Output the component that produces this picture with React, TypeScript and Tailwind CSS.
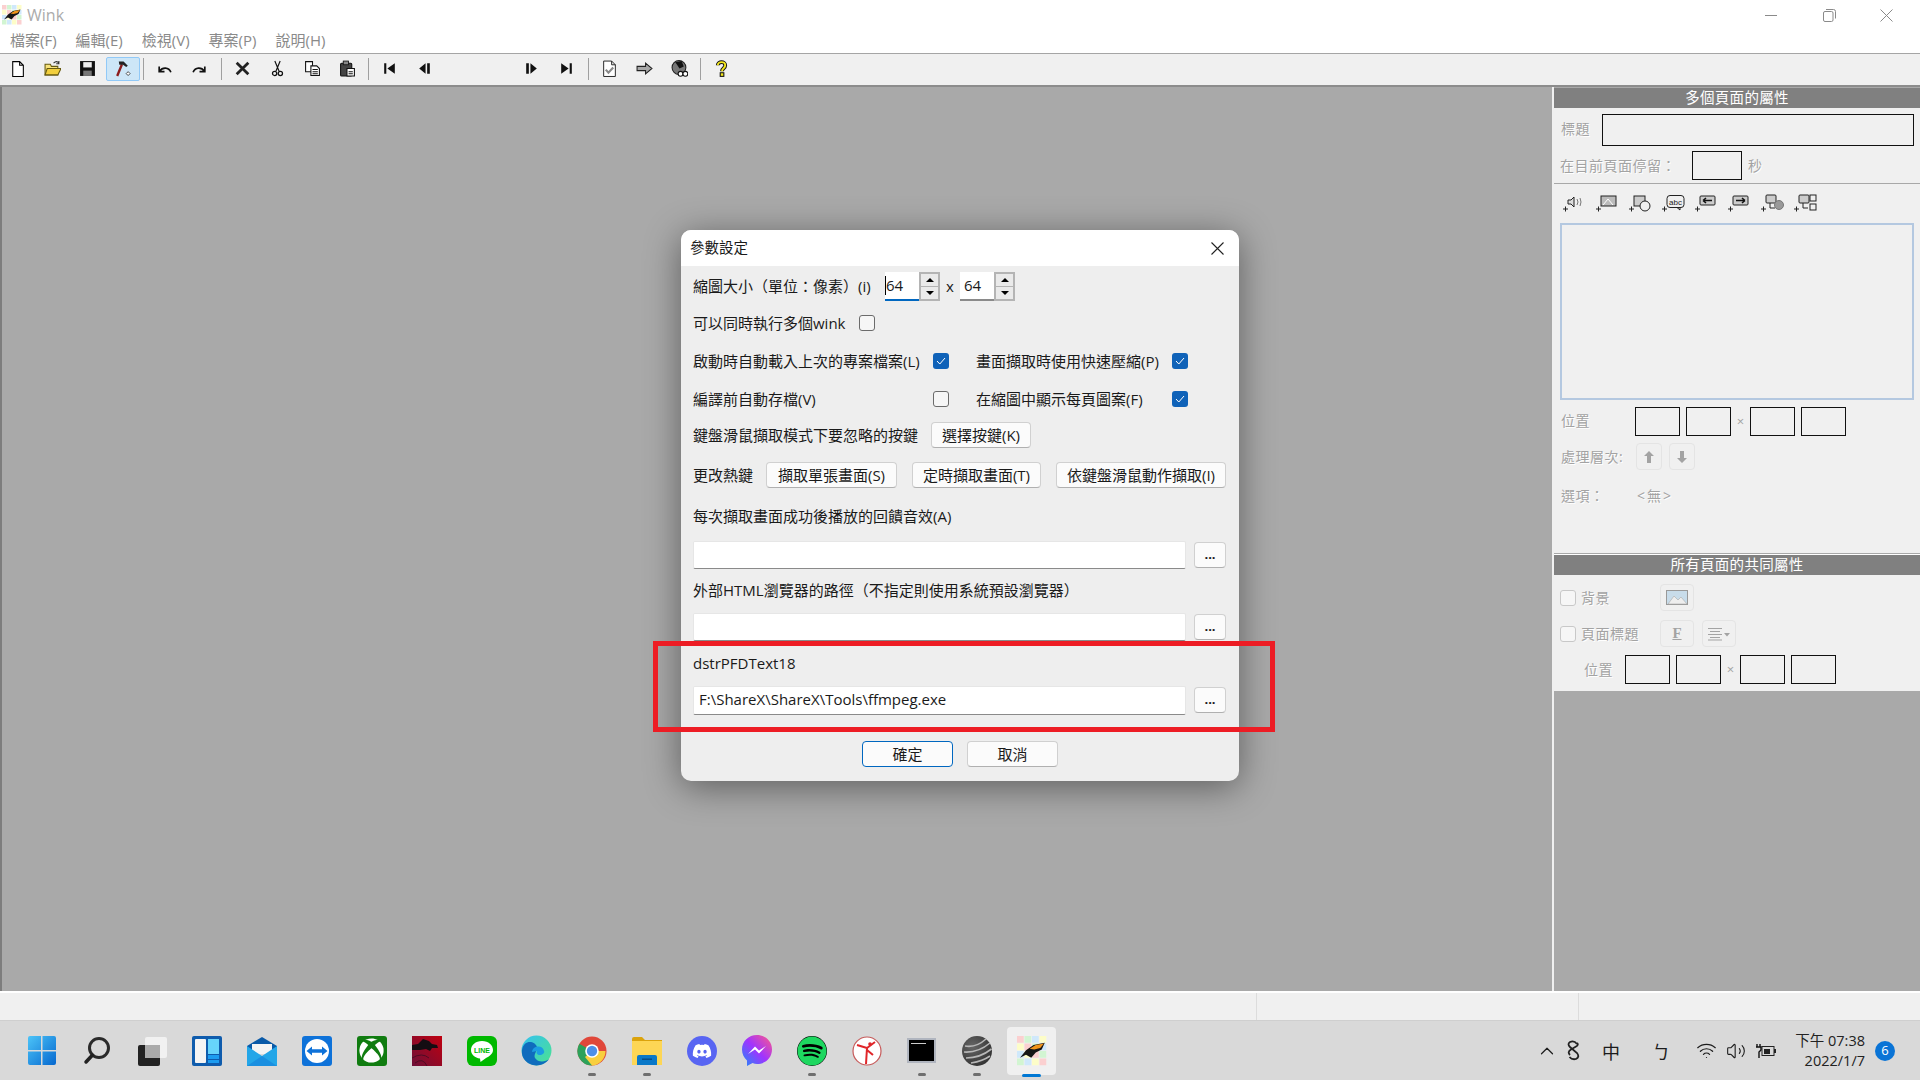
// App.tsx
// * Wink main window w/ the preferences dialog open, plus the Windows 11 taskbar

import type { ReactNode } from 'react';
import { ChevronUp, Volume2, Wifi } from 'lucide-react';
import { FaDiscord, FaSpotify, FaXbox } from 'react-icons/fa';

const UI_FONT = "font-['Open_Sans','Noto_Sans_CJK_TC',sans-serif] [text-spacing-trim:space-all]";

// * wink logo: pastel tiles w/ the bird on top
function WinkLogo({ size }: { size: number }) {
  const colors = ['#fbd0d0', '#d2f5d2', '#cfe8fb', '#fdfdc8'];
  const tiles = [];
  for (let y = 0; y < 4; y++) {
    for (let x = 0; x < 4; x++) {
      tiles.push(<rect key={`${x}-${y}`} x={x * 5} y={y * 5} width="4.5" height="4.5" fill={colors[(x + y * 3) % 4]} />);
    }
  }
  return (
    <svg width={size} height={size} viewBox="0 0 20 20">
      {tiles}
      <path d="M2 14.5 L6 9.5 L11 6 L18.5 4.5 L16.5 9 L12.5 11 L9.5 14.5 L6 12.5 Z" fill="#161616" />
      <path d="M8.5 8.5 L12.5 6 L18 5 L15.5 8 L11.5 9 Z" fill="#f0941a" />
    </svg>
  );
}

// * classic toolbar icons
function ToolIcon({ name }: { name: string }) {
  const body: Record<string, ReactNode> = {
    new: <path d="M3.5 1.5H10L13.5 5V15.5H3.5Z M10 1.5V5H13.5" fill="#fff" stroke="#000" />,
    open: (
      <>
        <path d="M1 4H6L7 6H13V14H1Z" fill="#f7e27a" stroke="#665a10" />
        <path d="M3 8H16L13 14H1Z" fill="#f2cf3d" stroke="#665a10" />
        <path d="M9 3Q12 0 14 3M14 1V3.5H11.5" fill="none" stroke="#333" />
      </>
    ),
    save: (
      <>
        <rect x="1" y="1" width="14" height="14" fill="#111" />
        <rect x="4" y="2" width="8" height="5" fill="#eee" />
        <rect x="4" y="10" width="8" height="5" fill="#777" />
      </>
    ),
    hammer: (
      <>
        <path d="M3 15L7.5 4" stroke="#8d1c1c" strokeWidth="2.2" />
        <path d="M4.5 1.5H9L13 5.5L11.5 6.5L8.5 4.5L5 4.5Z" fill="#222" />
        <rect x="12" y="11.5" width="2.6" height="2.6" fill="#fff" stroke="#222" strokeWidth=".7" transform="rotate(45 13.3 12.8)" />
      </>
    ),
    undo: <path d="M3 5V10H8M3.5 9.5C6 5.5 12 5.5 14 10.5" fill="none" stroke="#111" strokeWidth="1.6" transform="translate(0 1)" />,
    redo: <path d="M13 5V10H8M12.5 9.5C10 5.5 4 5.5 2 10.5" fill="none" stroke="#111" strokeWidth="1.6" transform="translate(0 1)" />,
    del: <path d="M2.5 2.5L13.5 13.5M13.5 2.5L2.5 13.5" stroke="#222" strokeWidth="2.6" />,
    cut: (
      <>
        <path d="M5.5 1L9.5 10.5M10.5 1L6.5 10.5" stroke="#111" strokeWidth="1.1" />
        <circle cx="5.3" cy="12.6" r="2" fill="none" stroke="#111" strokeWidth="1.2" />
        <circle cx="10.7" cy="12.6" r="2" fill="none" stroke="#111" strokeWidth="1.2" />
      </>
    ),
    copy: (
      <>
        <path d="M1.5 1.5H8V11H1.5Z" fill="#fff" stroke="#111" />
        <path d="M6.5 5.5H12L14.5 8V14.5H6.5Z M8 9H13M8 11H13M8 13H13" fill="#fff" stroke="#111" />
      </>
    ),
    paste: (
      <>
        <rect x="1.5" y="3" width="10.5" height="12" rx="1" fill="#444" stroke="#111" />
        <rect x="4" y="1" width="5" height="3.5" fill="#888" stroke="#111" strokeWidth=".8" />
        <path d="M7.5 8H14.5V15H7.5Z M9 11H13M9 13H13" fill="#fff" stroke="#111" />
      </>
    ),
    first: <path d="M3 3H5V13H3ZM13 3V13L6 8Z" fill="#111" />,
    prev: <path d="M9 3V13L3 8ZM10.5 3H13V13H10.5Z" fill="#111" />,
    next: <path d="M3 3H5.5V13H3ZM7 3L13 8L7 13Z" fill="#111" />,
    last: <path d="M3 3L10 8L3 13ZM11 3H13V13H11Z" fill="#111" />,
    check: (
      <>
        <path d="M2.5 1H10L13.5 4.5V15.5H2.5Z M10 1V4.5H13.5" fill="#fff" stroke="#222" strokeWidth=".9" />
        <path d="M4.5 9L7 12L11.5 7" fill="none" stroke="#888" strokeWidth="2" />
      </>
    ),
    arrow: <path d="M1 6H9V3L15 8L9 13V10H1Z" fill="#a8a8a8" stroke="#222" />,
    globe: (
      <>
        <circle cx="7.5" cy="7" r="6.5" fill="#777" stroke="#222" />
        <path d="M4 2L10 1L12 6L8 8L6 5Z" fill="#111" />
        <circle cx="9" cy="13" r="2.3" fill="#fff" stroke="#111" />
        <circle cx="13.5" cy="13" r="2.3" fill="#fff" stroke="#111" />
      </>
    ),
    help: (
      <>
        <path d="M4.5 5C4.5 1 11.5 1 11.5 5C11.5 8 8.5 7.5 8.5 10.5" fill="none" stroke="#111" strokeWidth="3.6" />
        <path d="M4.5 5C4.5 1 11.5 1 11.5 5C11.5 8 8.5 7.5 8.5 10.5" fill="none" stroke="#f4e81e" strokeWidth="1.8" />
        <rect x="6.8" y="12" width="3.4" height="3.4" fill="#f4e81e" stroke="#111" />
      </>
    ),
  };
  return (
    <svg width="17" height="17" viewBox="0 0 16 16">
      {body[name]}
    </svg>
  );
}

function ToolButton({ name, active, wide }: { name?: string; active?: boolean; wide?: boolean }) {
  return (
    <div className={`${wide ? 'w-[36px]' : 'w-[35px]'} h-[24px] flex items-center justify-center`}>
      {active ? (
        <div className="w-[34px] h-[24px] flex items-center justify-center bg-[#cde6f7] border border-[#91c9f7] rounded-[2px]">
          <ToolIcon name={name ?? ''} />
        </div>
      ) : (
        name && <ToolIcon name={name} />
      )}
    </div>
  );
}

function ToolSep({ wide }: { wide?: boolean }) {
  return (
    <div className={`${wide ? 'w-[8px]' : 'w-[7px]'} h-[22px] flex justify-center`}>
      <div className="w-px h-full bg-[#a0a0a0]" />
    </div>
  );
}

function Toolbar() {
  return (
    <div className="h-[34px] flex items-center pb-[2px] bg-[#f0f0f0] border-t border-[#a5a5a5] border-b-2 border-b-[#8c8c8c]">
      <ToolButton name="new" />
      <ToolButton name="open" />
      <ToolButton name="save" />
      <ToolButton name="hammer" active />
      <ToolSep />
      <ToolButton name="undo" />
      <ToolButton name="redo" />
      <ToolSep wide />
      <ToolButton name="del" />
      <ToolButton name="cut" />
      <ToolButton name="copy" />
      <ToolButton name="paste" />
      <ToolSep />
      <ToolButton name="first" />
      <ToolButton name="prev" />
      <ToolButton wide />
      <ToolButton wide />
      <ToolButton name="next" />
      <ToolButton name="last" />
      <ToolSep wide />
      <ToolButton name="check" />
      <ToolButton name="arrow" />
      <ToolButton name="globe" />
      <ToolSep />
      <ToolButton name="help" />
    </div>
  );
}

function TitleBar() {
  return (
    <div className="h-[30px] flex items-center bg-white pl-[2px]">
      <WinkLogo size={20} />
      <span className="ml-[5px] text-[16px] text-[#ababab]">Wink</span>
      <div className="ml-auto pr-[4px] flex items-center text-[#8a8a8a]">
        <div className="w-[58px] flex justify-center">
          <div className="w-[12px] h-px bg-[#8a8a8a]" />
        </div>
        <div className="w-[58px] flex justify-center">
          <svg width="13" height="13" viewBox="0 0 13 13" fill="none" stroke="#8a8a8a">
            <rect x=".5" y="2.5" width="9.5" height="10" rx="1.5" />
            <path d="M3 .5H10.5Q12.5 .5 12.5 2.5V9.5" />
          </svg>
        </div>
        <div className="w-[58px] pr-[2px] flex justify-center">
          <svg width="13" height="13" viewBox="0 0 13 13" fill="none" stroke="#8a8a8a">
            <path d="M.5 .5L12.5 12.5M12.5 .5L.5 12.5" />
          </svg>
        </div>
      </div>
    </div>
  );
}

function MenuBar() {
  const items = ['檔案(F)', '編輯(E)', '檢視(V)', '專案(P)', '說明(H)'];
  return (
    <div className="h-[23px] flex items-center bg-white pl-[10px] pb-[2px] gap-[19px] text-[15px] text-[#8a8a8a]">
      {items.map((item) => (
        <span key={item}>{item}</span>
      ))}
    </div>
  );
}

// * disabled winforms-ish field with a black outline
function BlackBox({ className }: { className: string }) {
  return <div className={`border border-[#111] bg-[#f0f0f0] ${className}`} />;
}

function Dim({ children, className = '' }: { children: ReactNode; className?: string }) {
  return <span className={`text-[#a3a3a3] text-[14px] tracking-[0.5px] [text-shadow:1px_1px_0_#fff] ${className}`}>{children}</span>;
}

function PanelHeader({ children }: { children: ReactNode }) {
  return <div className="h-[20px] flex items-center justify-center bg-[#808080] text-white text-[14.5px] tracking-[0.3px]">{children}</div>;
}

// * small "+ object" icons of the properties panel
function AddIcon({ children }: { children: ReactNode }) {
  return (
    <div className="w-[33px] flex justify-center">
      <svg width="24" height="18" viewBox="0 0 24 18" fill="none" stroke="#222" strokeWidth="1">
        <path d="M1 15H6M3.5 12.5V17.5" />
        {children}
      </svg>
    </div>
  );
}

function PanelIcons() {
  return (
    <div className="h-[39px] flex items-center pl-[3px] pb-[2px]">
      <AddIcon>
        <path d="M6 6H9L12 3V13L9 10H6Z" fill="#ddd" />
        <path d="M15 5Q17 8 15 11M18 4Q20 8 18 12" stroke="#777" />
      </AddIcon>
      <AddIcon>
        <rect x="6" y="2" width="15" height="10" fill="#bbb" />
        <path d="M8 11L13 5L18 11" stroke="#fff" />
      </AddIcon>
      <AddIcon>
        <rect x="6" y="2" width="11" height="10" fill="#ccc" />
        <circle cx="17" cy="12" r="5" fill="#f0f0f0" />
      </AddIcon>
      <AddIcon>
        <rect x="6" y="1.5" width="17" height="12" rx="3" fill="#f0f0f0" />
        <path d="M16 13.5L19 16V13.5" />
        <text x="8" y="10.5" fontSize="8" fill="#222" stroke="none" fontFamily="Liberation Sans">abc</text>
      </AddIcon>
      <AddIcon>
        <rect x="6" y="2" width="15" height="9" rx="1" fill="#ccc" />
        <path d="M9 6.5H18M9 6.5L12 4M9 6.5L12 9" strokeWidth="1.6" stroke="#111" />
      </AddIcon>
      <AddIcon>
        <rect x="6" y="2" width="15" height="9" rx="1" fill="#ccc" />
        <path d="M9 6.5H18M18 6.5L15 4M18 6.5L15 9" strokeWidth="1.6" stroke="#111" />
      </AddIcon>
      <AddIcon>
        <rect x="6" y="1" width="10" height="8" rx="1" fill="#ccc" />
        <path d="M10 9V14H15" />
        <circle cx="19" cy="11" r="4.5" fill="#999" stroke="#777" />
      </AddIcon>
      <AddIcon>
        <rect x="6" y="1" width="10" height="8" rx="1" fill="#ccc" />
        <path d="M10 9V14H15" />
        <rect x="17" y="1" width="6" height="6" fill="#f0f0f0" />
        <rect x="17" y="10" width="6" height="6" fill="#f0f0f0" />
      </AddIcon>
    </div>
  );
}

function SmallBtn({ children, w = 'w-[26px]' }: { children: ReactNode; w?: string }) {
  return <div className={`${w} h-[27px] flex items-center justify-center bg-[#f0f0f0] border border-[#e4e4e4] rounded-[4px]`}>{children}</div>;
}

function PanelCheck() {
  return <div className="w-[16px] h-[16px] rounded-[3px] border border-[#c8c8c8] bg-[#f6f6f6]" />;
}

function PositionBoxes() {
  return (
    <>
      <BlackBox className="w-[45px] h-[29px]" />
      <BlackBox className="w-[45px] h-[29px] ml-[6px]" />
      <span className="w-[19px] text-center text-[13px] leading-[29px] text-[#a3a3a3]">×</span>
      <BlackBox className="w-[45px] h-[29px]" />
      <BlackBox className="w-[45px] h-[29px] ml-[6px]" />
    </>
  );
}

function RightPanel() {
  return (
    <div className="w-[368px] shrink-0 flex flex-col bg-[#a9a9a9] border-l-2 border-[#f0f0f0] pl-0">
      <div className="h-px bg-[#a9a9a9]" />
      <div className="h-[603px] flex flex-col bg-[#f0f0f0]">
        <PanelHeader>多個頁面的屬性</PanelHeader>
        <div className="h-[43px] flex pl-[7px] pt-[6px]">
          <Dim className="w-[41px] mt-[4px]">標題</Dim>
          <BlackBox className="w-[312px] h-[32px]" />
        </div>
        <div className="h-[33px] flex items-center pl-[6px] pb-[4px] border-b border-[#a8a8a8]">
          <Dim className="w-[132px]">在目前頁面停留：</Dim>
          <BlackBox className="w-[50px] h-[29px]" />
          <Dim className="ml-[6px]">秒</Dim>
        </div>
        <PanelIcons />
        <div className="mx-[6px] h-[177px] border-2 border-[#b4c8e0] bg-[#f0f0f0]" />
        <div className="h-[43px] flex items-start pl-[7px] pt-[7px]">
          <Dim className="w-[74px] mt-[3px]">位置</Dim>
          <PositionBoxes />
        </div>
        <div className="h-[27px] flex items-center pl-[7px]">
          <Dim className="w-[75px]">處理層次:</Dim>
          <SmallBtn>
            <svg width="12" height="14" viewBox="0 0 12 14" fill="#a3a3a3"><path d="M6 1L11 6H8V13H4V6H1Z" /></svg>
          </SmallBtn>
          <div className="w-[7px]" />
          <SmallBtn>
            <svg width="12" height="14" viewBox="0 0 12 14" fill="#a3a3a3"><path d="M6 13L11 8H8V1H4V8H1Z" /></svg>
          </SmallBtn>
        </div>
        <div className="h-[50px] flex items-center pl-[7px]">
          <Dim className="w-[76px]">選項：</Dim>
          <Dim className="tracking-[2px]">&lt;無&gt;</Dim>
        </div>
        <div className="h-[34px] border-b border-[#a8a8a8]" />
        <div className="h-px bg-white" />
        <PanelHeader>所有頁面的共同屬性</PanelHeader>
        <div className="mt-[9px] h-[27px] flex items-center pl-[6px]">
          <PanelCheck />
          <Dim className="ml-[5px] w-[79px]">背景</Dim>
          <SmallBtn w="w-[34px]">
            <svg width="22" height="15" viewBox="0 0 22 15">
              <rect x=".5" y=".5" width="21" height="14" fill="#c8dcea" stroke="#999" />
              <path d="M2 14L8 6L12 10L15 7L21 14Z" fill="#eee" stroke="#aaa" strokeWidth=".6" />
            </svg>
          </SmallBtn>
        </div>
        <div className="mt-[9px] h-[27px] flex items-center pl-[6px]">
          <PanelCheck />
          <Dim className="ml-[5px] w-[79px]">頁面標題</Dim>
          <SmallBtn w="w-[34px]">
            <span className="font-['Liberation_Serif',serif] font-bold text-[15px] leading-none text-[#a3a3a3] underline">F</span>
          </SmallBtn>
          <div className="w-[8px]" />
          <SmallBtn w="w-[34px]">
            <svg width="24" height="14" viewBox="0 0 24 14" fill="none" stroke="#a3a3a3">
              <path d="M1 1.5H15M3 4.5H13M1 7.5H15M3 10.5H13M1 13H15" />
              <path d="M17 6H23L20 9.5Z" fill="#a3a3a3" stroke="none" />
            </svg>
          </SmallBtn>
        </div>
        <div className="mt-[8px] h-[29px] flex items-center pl-[30px]">
          <Dim className="w-[41px]">位置</Dim>
          <PositionBoxes />
        </div>
      </div>
    </div>
  );
}

function Checkbox({ checked }: { checked?: boolean }) {
  if (checked) {
    return (
      <div className="w-[16px] h-[16px] shrink-0 rounded-[3px] bg-[#0f62b8] flex items-center justify-center">
        <svg width="10" height="8" viewBox="0 0 10 8" fill="none" stroke="#fff" strokeWidth="1"><path d="M1 4L3.8 7L9 1" /></svg>
      </div>
    );
  }
  return <div className="w-[16px] h-[16px] shrink-0 rounded-[3px] border border-[#6b6b6b] bg-[#f6f6f6]" />;
}

function DlgButton({ children, className = '' }: { children: ReactNode; className?: string }) {
  return <div className={`h-[26px] flex items-center justify-center rounded-[4px] bg-[#fbfbfb] border border-[#d0d0d0] border-b-[#b0b0b0] text-[15px] text-[#1a1a1a] ${className}`}>{children}</div>;
}

function Spinner({ value, focus }: { value: string; focus?: boolean }) {
  return (
    <div className="w-[55px] h-[29px] flex">
      <div className={`w-[34px] flex items-center bg-white border-b-2 text-[15px] ${focus ? 'border-[#0067c0]' : 'border-[#8a8a8a]'}`}>
        {focus && <div className="w-px h-[19px] bg-black" />}
        <span className={focus ? '' : 'pl-[4px]'}>{value}</span>
      </div>
      <div className="w-[21px] flex flex-col gap-px p-[2px] bg-[#b4b4b4]">
        <div className="flex-1 flex items-center justify-center bg-[#eaeaea]">
          <div className="w-0 h-0 border-x-[4px] border-x-transparent border-b-[4px] border-b-black" />
        </div>
        <div className="flex-1 flex items-center justify-center bg-[#eaeaea]">
          <div className="w-0 h-0 border-x-[4px] border-x-transparent border-t-[4px] border-t-black" />
        </div>
      </div>
    </div>
  );
}

function PathRow({ value, h = 'h-[28px]' }: { value?: string; h?: string }) {
  return (
    <div className={`${h} flex items-start`}>
      <div className="w-[493px] h-full flex items-center pl-[5px] pb-[2px] bg-white border border-[#e6e6e6] border-b-[#8a8a8a] rounded-[2px] text-[15px] text-[#1a1a1a]">{value}</div>
      <DlgButton className="w-[32px] ml-[8px] mt-px !text-[13px] font-bold">...</DlgButton>
    </div>
  );
}

function Dialog() {
  return (
    <div className={`absolute left-[681px] top-[230px] w-[558px] h-[551px] rounded-[10px] overflow-hidden bg-[#eeeeee] shadow-[0_6px_36px_rgba(0,0,0,0.45)] text-[15px] text-[#1a1a1a] ${UI_FONT}`}>
      <div className="h-[36px] flex items-center justify-between bg-white pl-[9px] pr-[15px]">
        <span className="text-[14.5px]">參數設定</span>
        <svg width="13" height="13" viewBox="0 0 13 13" fill="none" stroke="#222" strokeWidth="1.1"><path d="M.5 .5L12.5 12.5M12.5 .5L.5 12.5" /></svg>
      </div>
      <div className="pl-[12px]">
        <div className="h-[40px] flex items-center">
          <span className="w-[192px] whitespace-nowrap">縮圖大小（單位：像素）(i)</span>
          <Spinner value="64" focus />
          <span className="w-[20px] text-center">x</span>
          <Spinner value="64" />
        </div>
        <div className="h-[32px] pt-[2px] flex items-center">
          <span className="w-[166px]">可以同時執行多個wink</span>
          <Checkbox />
        </div>
        <div className="h-[46px] flex items-center">
          <span className="w-[240px]">啟動時自動載入上次的專案檔案(L)</span>
          <Checkbox checked />
          <span className="ml-[27px] w-[196px]">畫面擷取時使用快速壓縮(P)</span>
          <Checkbox checked />
        </div>
        <div className="h-[30px] flex items-center">
          <span className="w-[240px]">編譯前自動存檔(V)</span>
          <Checkbox />
          <span className="ml-[27px] w-[196px]">在縮圖中顯示每頁圖案(F)</span>
          <Checkbox checked />
        </div>
        <div className="h-[42px] flex items-center">
          <span className="w-[238px]">鍵盤滑鼠擷取模式下要忽略的按鍵</span>
          <DlgButton className="w-[100px]">選擇按鍵(K)</DlgButton>
        </div>
        <div className="h-[38px] flex items-center">
          <span className="w-[73px]">更改熱鍵</span>
          <DlgButton className="w-[131px]">擷取單張畫面(S)</DlgButton>
          <DlgButton className="w-[129px] ml-[15px]">定時擷取畫面(T)</DlgButton>
          <DlgButton className="w-[170px] ml-[15px]">依鍵盤滑鼠動作擷取(I)</DlgButton>
        </div>
        <div className="h-[47px] pb-[2px] flex items-center">每次擷取畫面成功後播放的回饋音效(A)</div>
        <PathRow />
        <div className="h-[44px] pb-[2px] flex items-center whitespace-nowrap">外部HTML瀏覽器的路徑（不指定則使用系統預設瀏覽器）</div>
        <PathRow />
        <div className="h-[45px] flex items-center">dstrPFDText18</div>
        <PathRow value="F:\ShareX\ShareX\Tools\ffmpeg.exe" h="h-[29px]" />
      </div>
      <div className="mt-[26px] flex justify-center gap-[14px]">
        <DlgButton className="w-[91px] !border-[#0067c0]">確定</DlgButton>
        <DlgButton className="w-[91px]">取消</DlgButton>
      </div>
    </div>
  );
}

// * taskbar app icons
function TaskIcon({ name }: { name: string }) {
  switch (name) {
    case 'start':
      return (
        <svg width="30" height="31" viewBox="0 0 30 31">
          <defs>
            <linearGradient id="st" x1="0" y1="0" x2="1" y2="1"><stop offset="0" stopColor="#4cc4f8" /><stop offset="1" stopColor="#0668cf" /></linearGradient>
          </defs>
          <path d="M1 3Q1 1 3 1H14V15H1ZM15.5 1H27Q29 1 29 3V15H15.5ZM1 16.5H14V30H3Q1 30 1 28ZM15.5 16.5H29V28Q29 30 27 30H15.5Z" fill="url(#st)" />
        </svg>
      );
    case 'search':
      return (
        <svg width="30" height="30" viewBox="0 0 30 30" fill="none">
          <circle cx="17" cy="12" r="9.5" stroke="#2a2a2a" strokeWidth="3" />
          <path d="M10.5 19L4 26" stroke="#222" strokeWidth="3.5" strokeLinecap="round" />
        </svg>
      );
    case 'task':
      return (
        <svg width="30" height="30" viewBox="0 0 30 30">
          <rect x="1" y="9" width="22" height="21" rx="2" fill="#222" />
          <rect x="8" y="1" width="22" height="21" rx="2" fill="#f4f4f4" fillOpacity=".85" />
          <rect x="8" y="9" width="15" height="13" fill="#aaa" />
        </svg>
      );
    case 'widgets':
      return (
        <svg width="30" height="30" viewBox="0 0 30 30">
          <rect width="30" height="30" rx="2" fill="#0f5cad" />
          <rect x="3" y="3" width="11" height="24" rx="1" fill="#f4f4f4" />
          <rect x="16" y="3" width="11" height="15" fill="#67d4fb" />
          <rect x="16" y="19" width="11" height="4" fill="#1c9cf0" />
          <rect x="16" y="24" width="11" height="3" fill="#1c9cf0" />
        </svg>
      );
    case 'mail':
      return (
        <svg width="30" height="30" viewBox="0 0 30 30">
          <path d="M15 1L30 10V14H0V10Z" fill="#0a5aa8" />
          <path d="M5 8H25V18H5Z" fill="#f4f4f4" />
          <path d="M0 10L15 20L30 10V30H0Z" fill="#23a6e8" />
          <path d="M0 30L15 20L30 30Z" fill="#1a8fe0" />
        </svg>
      );
    case 'teamviewer':
      return (
        <svg width="30" height="30" viewBox="0 0 30 30">
          <rect width="30" height="30" rx="3" fill="#0e72d9" />
          <circle cx="15" cy="15" r="12" fill="#fff" />
          <path d="M4.5 15L10 10.5V13.2H20V10.5L25.5 15L20 19.5V16.8H10V19.5Z" fill="#0e72d9" />
        </svg>
      );
    case 'xbox':
      return (
        <div className="w-[30px] h-[30px] rounded-[3px] bg-[#107c10] flex items-center justify-center">
          <FaXbox size={25} color="#fff" />
        </div>
      );
    case 'msi':
      return (
        <svg width="30" height="30" viewBox="0 0 30 30">
          <defs>
            <linearGradient id="ms" x1="0" y1="1" x2="1" y2="0"><stop offset="0" stopColor="#6d1038" /><stop offset="1" stopColor="#c00010" /></linearGradient>
          </defs>
          <rect width="30" height="30" fill="url(#ms)" />
          <path d="M0 9L6 8L11 3L17 5L20 8L25 9L26 12L20 12L18 15L14 13L8 14L0 14Z" fill="#140d12" />
          <path d="M0 22Q10 16 17 22M3 27Q11 21 15 30" fill="none" stroke="#4d0c24" />
        </svg>
      );
    case 'line':
      return (
        <svg width="30" height="30" viewBox="0 0 30 30">
          <rect width="30" height="30" rx="6" fill="#00b900" />
          <path d="M15 5C8.5 5 4 9 4 14C4 18.5 8 22 13 22.5L13.5 26L19 22C23 20 26 17.5 26 14C26 9 21.5 5 15 5Z" fill="#fff" />
          <text x="15" y="16.5" textAnchor="middle" fontSize="7" fontWeight="700" fill="#00b900" fontFamily="Liberation Sans">LINE</text>
        </svg>
      );
    case 'edge':
      return (
        <svg width="31" height="31" viewBox="0 0 31 31">
          <defs>
            <linearGradient id="ed" x1="0" y1="0" x2="1" y2="1"><stop offset="0" stopColor="#35c1f1" /><stop offset="1" stopColor="#4be38e" /></linearGradient>
          </defs>
          <circle cx="15.5" cy="15.5" r="15" fill="url(#ed)" />
          <path d="M1 15C3 4 14 6 16 12C17 16 12 19 14 23C17 28 25 27 28 24C23 32 9 33 3 24C1 21 .7 18 1 15Z" fill="#0f6cbd" />
          <path d="M11 17C12 10 22 10 23 16C24 18 21 20 19 20C16 20 15 18 16 16" fill="#1b9de2" />
        </svg>
      );
    case 'chrome':
      return (
        <svg width="30" height="30" viewBox="0 0 30 30">
          <circle cx="15" cy="15" r="14.5" fill="#e0473a" />
          <path d="M15 15L2.4 7.7A14.5 14.5 0 0 0 15 29.5L22 15Z" fill="#2ca15a" />
          <path d="M15 15H28.5A14.5 14.5 0 0 1 15 29.5L8 21Z" fill="#f8cf3f" />
          <circle cx="15" cy="15" r="6.8" fill="#fff" />
          <circle cx="15" cy="15" r="5.2" fill="#4d8fe8" />
        </svg>
      );
    case 'files':
      return (
        <svg width="30" height="28" viewBox="0 0 30 28">
          <path d="M0 2Q0 0 2 0H10L13 3H30V10H0Z" fill="#dba30c" />
          <rect y="4" width="30" height="24" fill="#fdd655" />
          <path d="M5 20Q5 18 7 18H23Q25 18 25 20V28H5Z" fill="#0a78c8" />
          <rect x="10" y="21.5" width="10" height="1.4" fill="#054a85" />
        </svg>
      );
    case 'discord':
      return (
        <div className="w-[30px] h-[30px] rounded-full bg-[#5865f2] flex items-center justify-center">
          <FaDiscord size={20} color="#fff" />
        </div>
      );
    case 'messenger':
      return (
        <svg width="30" height="31" viewBox="0 0 30 31">
          <defs>
            <linearGradient id="mg" x1="0" y1="1" x2="1" y2="0"><stop offset="0" stopColor="#1e8cf8" /><stop offset=".5" stopColor="#a033ff" /><stop offset="1" stopColor="#ff5c87" /></linearGradient>
          </defs>
          <path d="M15 0C6.5 0 0 6.3 0 14.5C0 19 2 23 5 25.5V31L10.5 28C12 28.5 13.5 29 15 29C23.5 29 30 22.7 30 14.5C30 6.3 23.5 0 15 0Z" fill="url(#mg)" />
          <path d="M6 19L13 11.5L17 15.5L24 11L17 18.5L13 14.5Z" fill="#fff" />
        </svg>
      );
    case 'spotify':
      return (
        <div className="w-[30px] h-[30px] rounded-full bg-black flex items-center justify-center">
          <FaSpotify size={30} color="#1ed760" />
        </div>
      );
    case 'yoga':
      return (
        <svg width="30" height="30" viewBox="0 0 30 30" fill="none">
          <circle cx="15" cy="15" r="14" fill="#fff" stroke="#c65a5a" strokeWidth="1.2" />
          <path d="M15 12L14 28M15 12L5 9M15 12L23 6M15 14L21 19" stroke="#e0262a" strokeWidth="2" />
          <circle cx="18" cy="8" r="1.8" fill="#e0262a" />
        </svg>
      );
    case 'cmd':
      return (
        <div className="w-[29px] h-[25px] bg-black border-2 border-[#b0b5bf] pl-[2px] pt-[3px]">
          <div className="w-[15px] h-px bg-[#ccc]" />
        </div>
      );
    case 'ball':
      return (
        <svg width="30" height="30" viewBox="0 0 30 30" fill="none">
          <defs>
            <radialGradient id="bl" cx=".35" cy=".35" r=".8"><stop offset="0" stopColor="#666" /><stop offset="1" stopColor="#2c2c2c" /></radialGradient>
          </defs>
          <circle cx="15" cy="15" r="15" fill="url(#bl)" />
          <path d="M3 10Q14 12 24 3M2 16Q16 17 28 7M4 22Q18 22 29.5 13M9 27Q21 25 28 20" stroke="#b8b8b8" strokeWidth="1.6" />
        </svg>
      );
    default:
      return <WinkLogo size={30} />;
  }
}

function TaskSlot({ name, running, active }: { name: string; running?: boolean; active?: boolean }) {
  return (
    <div className="relative w-[55px] h-[60px] flex items-center justify-center">
      {active && <div className="absolute left-[3px] top-[6px] w-[49px] h-[48px] rounded-[4px] bg-[#f0f0f0]" />}
      <div className="relative flex items-center justify-center">
        <TaskIcon name={name} />
      </div>
      {running && <div className="absolute left-[24px] bottom-[5px] w-[8px] h-[3px] rounded-full bg-[#6f6f6f]" />}
      {active && <div className="absolute left-[18px] bottom-[4px] w-[19px] h-[3px] rounded-full bg-[#0078d4]" />}
    </div>
  );
}

function Tray() {
  return (
    <div className="ml-auto flex items-center text-[#1c1c1c]">
      <ChevronUp size={22} strokeWidth={1.3} className="mr-[8px]" />
      <svg width="15" height="21" viewBox="0 0 15 21" fill="none" stroke="#222" strokeWidth="1.8">
        <path d="M11 4Q8 0 4 2Q1 4 4 7L11 13Q14 17 10 19Q6 20 3.5 17M4 15Q1 12 5 9.5L10 6.5Q13 5 11 3" />
      </svg>
      <span className="w-[60px] text-center text-[18px] leading-none font-['Noto_Sans_CJK_TC',sans-serif]">中</span>
      <span className="w-[40px] text-center text-[18px] leading-none font-['Noto_Sans_CJK_TC',sans-serif]">ㄅ</span>
      <Wifi size={21} strokeWidth={1.4} className="ml-[15px]" />
      <Volume2 size={20} strokeWidth={1.3} className="ml-[9px]" />
      <svg width="20" height="14" viewBox="0 0 20 14" className="ml-[10px]">
        <rect x="6" y="2.5" width="12" height="9" fill="none" stroke="#222" />
        <rect x="18" y="5" width="2" height="4" fill="#222" />
        <rect x="8" y="5" width="6" height="5" fill="#222" />
        <path d="M1 0V3M4 0V3M0 3H5V6L3 8V14" fill="none" stroke="#111" strokeWidth="1.4" />
      </svg>
      <div className="w-[79px] ml-[10px] text-right text-[14.5px] leading-[20px] text-[#222]">
        <div className="whitespace-nowrap">下午 07:38</div>
        <div>2022/1/7</div>
      </div>
      <div className="w-[20px] h-[20px] ml-[10px] mr-[25px] rounded-full bg-[#0a74d6] text-white text-[13px] flex items-center justify-center">6</div>
    </div>
  );
}

function Taskbar() {
  const pinned: { name: string; running?: boolean; active?: boolean }[] = [
    { name: 'start' },
    { name: 'search' },
    { name: 'task' },
    { name: 'widgets' },
    { name: 'mail' },
    { name: 'teamviewer' },
    { name: 'xbox' },
    { name: 'msi' },
    { name: 'line' },
    { name: 'edge' },
    { name: 'chrome', running: true },
    { name: 'files', running: true },
    { name: 'discord' },
    { name: 'messenger' },
    { name: 'spotify', running: true },
    { name: 'yoga' },
    { name: 'cmd', running: true },
    { name: 'ball', running: true },
    { name: 'wink', active: true },
  ];
  return (
    <div className="h-[60px] flex items-center bg-[#d9d9d9] border-t border-[#cfcfcf] pl-[14px]">
      {pinned.map((item) => (
        <TaskSlot key={item.name} name={item.name} running={item.running} active={item.active} />
      ))}
      <Tray />
    </div>
  );
}

export default function App() {
  return (
    <div className={`relative w-[1920px] h-[1080px] overflow-hidden flex flex-col bg-[#f0f0f0] ${UI_FONT}`}>
      <TitleBar />
      <MenuBar />
      <Toolbar />

      {/* Canvas + properties panel */}
      <div className="h-[904px] flex bg-[#a9a9a9]">
        <div className="flex-1 bg-[#a9a9a9] border-l-2 border-l-[#7d7d7d]" />
        <RightPanel />
      </div>

      {/* Status bar */}
      <div className="h-[29px] flex bg-[#f0f0f0] border-t-2 border-white">
        <div className="w-[1257px] border-r border-[#dcdcdc]" />
        <div className="w-[322px] border-r border-[#dcdcdc]" />
      </div>

      <Taskbar />

      <Dialog />

      {/* Red highlight from the screenshot */}
      <div className="absolute left-[653px] top-[641px] w-[622px] h-[91px] border-[5px] border-[#ed1c24]" />
    </div>
  );
}
